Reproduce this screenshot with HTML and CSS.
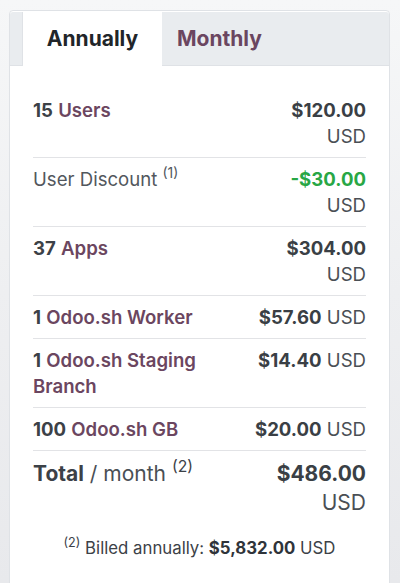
FILE: index.html
```html
<!DOCTYPE html>
<html lang="en">
<head>
<meta charset="utf-8">
<link rel="stylesheet" href="styles.css">
</head>
<body>
<div class="card">
  <div class="tabs">
    <div class="tab active">Annually</div>
    <div class="tab">Monthly</div>
  </div>
  <div class="card-body">
    <div class="row">
      <div class="label"><b>15</b> <span class="link">Users</span></div>
      <div class="price"><b>$120.00</b> USD</div>
    </div>
    <div class="row">
      <div class="label plain">User Discount <sup>(1)</sup></div>
      <div class="price"><b class="green">-$30.00</b> USD</div>
    </div>
    <div class="row">
      <div class="label"><b>37</b> <span class="link">Apps</span></div>
      <div class="price"><b>$304.00</b> USD</div>
    </div>
    <div class="row">
      <div class="label"><b>1</b> <span class="link">Odoo.sh Worker</span></div>
      <div class="price"><b>$57.60</b> USD</div>
    </div>
    <div class="row">
      <div class="label"><b>1</b> <span class="link">Odoo.sh Staging Branch</span></div>
      <div class="price"><b>$14.40</b> USD</div>
    </div>
    <div class="row">
      <div class="label"><b>100</b> <span class="link">Odoo.sh GB</span></div>
      <div class="price"><b>$20.00</b> USD</div>
    </div>
    <div class="row total">
      <div class="label"><b>Total</b> <span class="per">/ month</span> <sup>(2)</sup></div>
      <div class="price"><b>$486.00</b> USD</div>
    </div>
    <p class="note"><sup>(2)</sup> Billed annually: <b>$5,832.00</b> USD</p>
  </div>
</div>
</body>
</html>
```
FILE: styles.css
```css
html, body {
  margin: 0;
  height: 100%;
}
body {
  background: linear-gradient(180deg, #f6f7f8 0%, #eeeff1 50%, #e8e9ec 100%);
  padding: 10px 10px 0 9px;
  box-sizing: border-box;
  font-family: Inter, "Noto Sans", sans-serif;
  color: #4a4f55;
  overflow: hidden;
}
.card {
  background: #fff;
  border: 1px solid #dfe2e6;
  border-radius: 4px;
  height: 620px;
}
.tabs {
  display: flex;
  background: #e9ecef;
  margin-top: 1px;
  height: 53px;
  border-bottom: 1px solid #dfe2e6;
  padding-left: 12px;
  border-radius: 3px 3px 0 0;
}
.tab {
  font-size: 21px;
  font-weight: 700;
  line-height: 53px;
  color: #6b4660;
  padding: 0 15px;
}
.tab.active {
  background: #fff;
  color: #212529;
  width: 140px;
  box-sizing: border-box;
  text-align: center;
  padding: 0;
  height: 54px;
  border-left: 1px solid #dfe2e6;
}
.card-body {
  padding: 23px 23px 0 23px;
}
.row {
  display: flex;
  justify-content: space-between;
  gap: 10px;
  padding: 8px 0;
  font-size: 18.6px;
  line-height: 26px;
  border-bottom: 1px solid #e2e3e6;
}
.label {
  flex: 1;
  color: #3c4147;
}
.label b {
  font-weight: 700;
}
.label.plain {
  color: #52575d;
}
.link {
  color: #6b4660;
  font-weight: 600;
}
sup {
  font-size: 0.75em;
  line-height: 0;
  vertical-align: 0.55em;
}
.price {
  width: 113px;
  flex: none;
  text-align: right;
  color: #4a4f55;
}
.price b {
  color: #3a3f45;
  font-weight: 700;
}
.price b.green {
  color: #28a745;
}
.total {
  border-bottom: none;
  font-size: 21px;
  line-height: 29px;
}
.total .label b {
  font-weight: 700;
}
.per {
  color: #4a4f55;
}
.total .price {
  width: 120px;
}
.note {
  margin: 11px 0 0;
  text-align: center;
  font-size: 16.8px;
  line-height: 24px;
  color: #3c4147;
}
.note b {
  font-weight: 700;
  color: #2f343a;
}
```
